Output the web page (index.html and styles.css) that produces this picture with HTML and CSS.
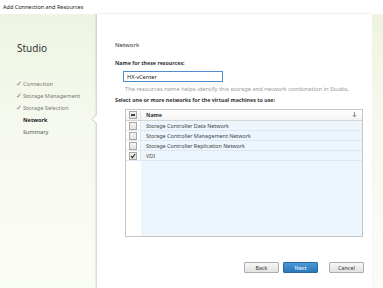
FILE: index.html
```html
<!DOCTYPE html>
<html lang="en">

<head>
    <meta charset="UTF-8">
    <meta name="viewport" content="width=device-width, initial-scale=1.0">
    <title>Add Connection and Resources</title>
    <link rel="stylesheet" href="styles.css">
</head>

<body>
    <div class="titlebar">Add Connection and Resources</div>
    <div class="wizard">
        <div class="sidebar">
            <div class="brand">Studio</div>
            <ul class="steps">
                <li class="done"><span class="tick">&#10003;</span>Connection</li>
                <li class="done"><span class="tick">&#10003;</span>Storage Management</li>
                <li class="done"><span class="tick">&#10003;</span>Storage Selection</li>
                <li class="current">Network</li>
                <li>Summary</li>
            </ul>
        </div>
        <div class="panel">
            <div class="notch"></div>
            <div class="heading">Network</div>
            <div class="label">Name for these resources:</div>
            <input class="name-input" type="text" value="HX-vCenter">
            <div class="help">The resources name helps identify this storage and network combination in Studio.</div>
            <div class="label">Select one or more networks for the virtual machines to use:</div>
            <div class="table">
                <div class="row head">
                    <div class="cell-check"><span class="box partial"></span></div>
                    <div class="cell-name">Name</div>
                    <svg class="sort" width="5" height="6" viewBox="0 0 5 6">
                        <path d="M2.5 0 V4" stroke="#999" stroke-width="1.2" />
                        <path d="M0.5 3 L2.5 5.5 L4.5 3 Z" fill="#999" />
                    </svg>
                </div>
                <div class="row">
                    <div class="cell-check"><span class="box"></span></div>
                    <div class="cell-name">Storage Controller Data Network</div>
                </div>
                <div class="row">
                    <div class="cell-check"><span class="box"></span></div>
                    <div class="cell-name">Storage Controller Management Network</div>
                </div>
                <div class="row">
                    <div class="cell-check"><span class="box"></span></div>
                    <div class="cell-name">Storage Controller Replication Network</div>
                </div>
                <div class="row">
                    <div class="cell-check">
                        <span class="box">
                            <svg width="6" height="6" viewBox="0 0 6 6">
                                <path d="M1 3 L2.5 4.6 L5.2 1" fill="none" stroke="#333" stroke-width="1.2" />
                            </svg>
                        </span>
                    </div>
                    <div class="cell-name">VDI</div>
                </div>
            </div>
            <div class="buttons">
                <button class="btn">Back</button>
                <button class="btn primary">Next</button>
                <button class="btn cancel">Cancel</button>
            </div>
        </div>
    </div>
</body>

</html>
```

FILE: styles.css
```css
body {
    margin: 0;
    width: 383px;
    height: 288px;
    overflow: hidden;
    font-family: "Noto Sans", "Open Sans", sans-serif;
    font-size: 5.6px;
    color: #333;
    background: #fff;
}

.titlebar {
    height: 14px;
    line-height: 14px;
    padding-left: 3px;
    font-size: 5.5px;
    color: #222;
    background: #fff;
}

.wizard {
    display: flex;
    height: 274px;
    background: linear-gradient(to bottom, #eef4e1 0%, #f6f9ef 40%, #fafcf6 100%);
}

.sidebar {
    width: 97px;
    padding-top: 28px;
    box-sizing: border-box;
}

.brand {
    padding-left: 17px;
    font-size: 10px;
    line-height: 12px;
    color: #333;
}

.steps {
    list-style: none;
    margin: 24px 0 0 0;
    padding: 0 0 0 23px;
}

.steps li {
    position: relative;
    height: 12px;
    line-height: 12px;
    font-size: 5.6px;
    color: #777;
}

.steps .tick {
    position: absolute;
    left: -7.5px;
    font-size: 6.5px;
    font-weight: bold;
    color: #999;
}

.steps .current {
    font-weight: bold;
    color: #222;
}

.steps li:last-child {
    color: #555;
}

.panel {
    position: relative;
    flex: 1;
    margin-right: 11px;
    padding: 27px 8px 0 18px;
    background: #fff;
    box-shadow: -1px 0 2px rgba(0, 0, 0, 0.18);
}

.notch {
    position: absolute;
    left: -3px;
    top: 102px;
    width: 6px;
    height: 6px;
    background: #fff;
    transform: rotate(45deg);
    box-shadow: -1px 1px 1px rgba(0, 0, 0, 0.12);
}

.heading {
    line-height: 8px;
    font-size: 6px;
    color: #333;
    margin-bottom: 10px;
}

.label {
    line-height: 8px;
    font-weight: bold;
    font-size: 5.3px;
    color: #333;
}

.name-input {
    display: block;
    width: 100px;
    height: 11px;
    box-sizing: border-box;
    margin: 4px 0 3px 8px;
    padding: 0 3px;
    border: 1px solid #4f8fd0;
    font-family: inherit;
    font-size: 5.6px;
    color: #222;
}

.help {
    margin: 0 0 3px 10px;
    line-height: 8px;
    font-size: 5.75px;
    color: #999;
}

.table {
    margin: 5px 0 0 10px;
    width: 238px;
    height: 128px;
    box-sizing: border-box;
    border: 1px solid #c6c6c6;
    background: linear-gradient(to right, #fff 15px, #edf5fd 15px);
}

.row {
    position: relative;
    display: flex;
    height: 10px;
    border-bottom: 1px solid #dfe8f2;
    box-sizing: border-box;
    align-items: center;
}

.row.head {
    height: 11px;
    background: linear-gradient(to bottom, #fff, #f4f4f4);
    border-bottom: 1px solid #d4d4d4;
}

.cell-check {
    width: 15px;
    height: 100%;
    display: flex;
    align-items: center;
    justify-content: center;
    border-right: 1px solid #e4e4e4;
    box-sizing: border-box;
}

.cell-name {
    padding-left: 5px;
    font-size: 5.4px;
    color: #444;
}

.head .cell-name {
    font-weight: bold;
    color: #333;
}

.box {
    display: flex;
    align-items: center;
    justify-content: center;
    width: 6px;
    height: 6px;
    border: 1px solid #a9a9a9;
    background: linear-gradient(to bottom, #f4f4f4, #e2e2e2);
}

.box.partial::after {
    content: "";
    width: 4px;
    height: 1.5px;
    background: #444;
}

.sort {
    position: absolute;
    right: 5px;
    top: 2px;
}

.buttons {
    display: flex;
    justify-content: flex-end;
    margin-top: 25px;
}

.btn {
    width: 35px;
    height: 11px;
    padding: 0;
    border: 1px solid #adadad;
    border-radius: 1px;
    background: linear-gradient(to bottom, #f7f7f7, #e2e2e2);
    font-family: inherit;
    font-size: 5.4px;
    color: #333;
}

.btn.primary {
    margin-left: 4px;
    border-color: #2a6aa4;
    background: linear-gradient(to bottom, #4b98d6, #2a78bb);
    color: #fff;
}

.btn.cancel {
    margin-left: 11px;
}
```
